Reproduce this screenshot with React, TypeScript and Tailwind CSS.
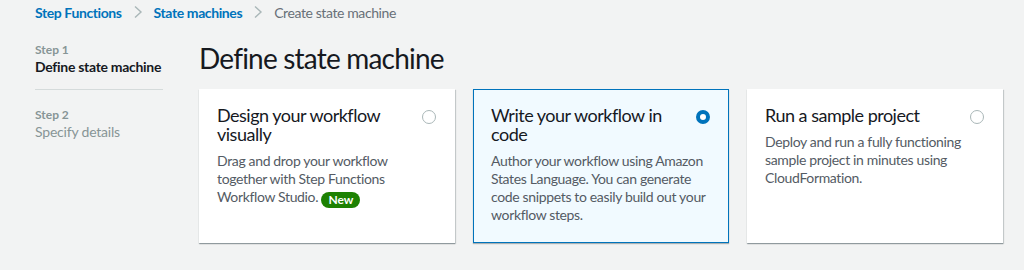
import React from 'react';

const font = { fontFamily: 'Lato, "Open Sans", Arial, sans-serif' };

function Chevron() {
  return (
    <svg width="10" height="14" viewBox="0 0 10 14" className="mx-[11px]">
      <path d="M2 1.5 L8 7 L2 12.5" fill="none" stroke="#aab7b8" strokeWidth="1.4" />
    </svg>
  );
}

function Radio({ checked }: { checked?: boolean }) {
  return checked ? (
    <span className="block w-[14px] h-[14px] rounded-full border-[4px] border-[#0073bb] bg-white shrink-0" />
  ) : (
    <span className="block w-[14px] h-[14px] rounded-full border border-[#aab7b8] bg-white shrink-0" />
  );
}

interface Option {
  title: string;
  body: React.ReactNode;
  checked?: boolean;
}

const options: Option[] = [
  {
    title: 'Design your workflow visually',
    body: (
      <>
        Drag and drop your workflow together with Step Functions Workflow Studio.{' '}
        <span className="inline-block align-[-2px] rounded-full bg-[#1d8102] px-[7px] text-[12px] leading-[16px] font-bold tracking-normal text-white">
          New
        </span>
      </>
    ),
  },
  {
    title: 'Write your workflow in code',
    body: 'Author your workflow using Amazon States Language. You can generate code snippets to easily build out your workflow steps.',
    checked: true,
  },
  {
    title: 'Run a sample project',
    body: 'Deploy and run a fully functioning sample project in minutes using CloudFormation.',
  },
];

function OptionCard({ option }: { option: Option }) {
  return (
    <div
      className={
        option.checked
          ? 'w-[256px] h-[154px] border border-[#0073bb] bg-[#f1faff] shadow-[0_1px_1px_0_rgba(0,28,36,0.3)] pl-[17px] pr-[18px] pt-[16px]'
          : 'w-[256px] h-[154px] border border-transparent bg-white shadow-[0_1px_1px_0_rgba(0,28,36,0.3),1px_1px_1px_0_rgba(0,28,36,0.15)] pl-[17px] pr-[18px] pt-[16px]'
      }
    >
      <div className="flex items-start justify-between gap-4">
        <h3 className="text-[18px] leading-[19px] tracking-[-0.5px] text-[#16191f]">{option.title}</h3>
        <div className="pt-[4px]">
          <Radio checked={option.checked} />
        </div>
      </div>
      <p className="mt-[8px] text-[14px] leading-[18px] tracking-[-0.35px] text-[#545b64]">{option.body}</p>
    </div>
  );
}

export default function App() {
  return (
    <div className="w-[1024px] h-[270px] bg-[#f2f3f3] pl-[35px] overflow-hidden" style={font}>
      <nav className="flex items-center h-[24px] text-[14px] tracking-[-0.4px]">
        <a className="font-bold text-[#0073bb]">Step Functions</a>
        <Chevron />
        <a className="font-bold text-[#0073bb]">State machines</a>
        <Chevron />
        <span className="text-[#687078]">Create state machine</span>
      </nav>

      <div className="flex gap-[36px] mt-[17px]">
        <aside className="w-[128px] shrink-0 pt-[1px]">
          <div className="text-[12px] leading-[16px] font-bold text-[#879596]">Step 1</div>
          <div className="text-[14px] leading-[18px] font-bold tracking-[-0.3px] whitespace-nowrap text-[#16191f]">
            Define state machine
          </div>
          <div className="h-px bg-[#d5dbdb] mt-[13px] mb-[17px]" />
          <div className="text-[12px] leading-[16px] font-bold text-[#879596]">Step 2</div>
          <div className="text-[14px] leading-[18px] tracking-[-0.2px] text-[#879596]">Specify details</div>
        </aside>

        <main>
          <h1 className="text-[28px] leading-[36px] tracking-[-0.8px] text-[#16191f] mt-[-1px]">Define state machine</h1>
          <div className="flex gap-[18px] mt-[13px]">
            {options.map((o) => (
              <OptionCard key={o.title} option={o} />
            ))}
          </div>
        </main>
      </div>
    </div>
  );
}
